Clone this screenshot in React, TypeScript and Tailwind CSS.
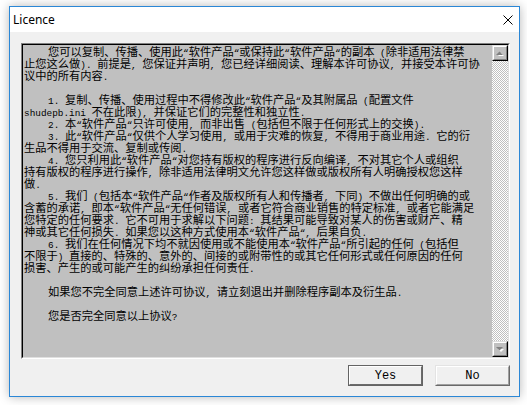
import React from 'react';

// each entry: [indented, text]; empty text = blank line
const lines: [boolean, string][] = [
  [true, '您可以复制、传播、使用此“软件产品“或保持此“软件产品“的副本 (除非适用法律禁'],
  [false, '止您这么做). 前提是, 您保证并声明, 您已经详细阅读、理解本许可协议, 并接受本许可协'],
  [false, '议中的所有内容.'],
  [false, ''],
  [true, '1. 复制、传播、使用过程中不得修改此“软件产品“及其附属品 (配置文件'],
  [false, 'shudepb.ini 不在此限), 并保证它们的完整性和独立性.'],
  [true, '2. 本“软件产品“只许可使用, 而非出售 (包括但不限于任何形式上的交换).'],
  [true, '3. 此“软件产品“仅供个人学习使用, 或用于灾难的恢复, 不得用于商业用途. 它的衍'],
  [false, '生品不得用于交流、复制或传阅.'],
  [true, '4. 您只利用此“软件产品“对您持有版权的程序进行反向编译, 不对其它个人或组织'],
  [false, '持有版权的程序进行操作, 除非适用法律明文允许您这样做或版权所有人明确授权您这样'],
  [false, '做.'],
  [true, '5. 我们 (包括本“软件产品“作者及版权所有人和传播者, 下同) 不做出任何明确的或'],
  [false, '含蓄的承诺, 即本“软件产品“无任何错误, 或者它符合商业销售的特定标准, 或者它能满足'],
  [false, '您特定的任何要求. 它不可用于求解以下问题: 其结果可能导致对某人的伤害或财产、精'],
  [false, '神或其它任何损失. 如果您以这种方式使用本“软件产品“, 后果自负.'],
  [true, '6. 我们在任何情况下均不就因使用或不能使用本“软件产品“所引起的任何 (包括但'],
  [false, '不限于) 直接的、特殊的、意外的、间接的或附带性的或其它任何形式或任何原因的任何'],
  [false, '损害、产生的或可能产生的纠纷承担任何责任.'],
  [false, ''],
  [true, '如果您不完全同意上述许可协议, 请立刻退出并删除程序副本及衍生品.'],
  [false, ''],
  [true, '您是否完全同意以上协议?'],
];

function Line({ text }: { text: string }) {
  // half-width runs get a mono font sized so each char is half a CJK cell
  const parts = text.split(/([\x00-\x7F“”]+)/).filter((p) => p.length > 0);
  return (
    <>
      {parts.map((p, i) =>
        /^[\x00-\x7F“”]+$/.test(p) ? (
          <span key={i} className="font-['Liberation_Mono',monospace] text-[9.4px]">
            {p}
          </span>
        ) : (
          <span key={i}>{p}</span>
        )
      )}
    </>
  );
}

function ScrollButton({ up }: { up?: boolean }) {
  return (
    <div className="w-[16px] h-[16px] bg-[#c0c0c0] border border-t-[#dfdfdf] border-l-[#dfdfdf] border-r-black border-b-black">
      <div className="w-full h-full border border-t-white border-l-white border-r-[#808080] border-b-[#808080] flex items-center justify-center">
        <svg width="8" height="5" viewBox="0 0 8 5">
          {up ? (
            <>
              <path d="M1 5 L4 2 L7 5 Z" fill="#ffffff" transform="translate(1 0)" />
              <path d="M0 4 L3.5 0.5 L7 4 Z" fill="#808080" />
            </>
          ) : (
            <>
              <path d="M1 1 L4 4 L7 1 Z" fill="#ffffff" transform="translate(1 1)" />
              <path d="M0 0 L3.5 3.5 L7 0 Z" fill="#808080" />
            </>
          )}
        </svg>
      </div>
    </div>
  );
}

export default function App() {
  return (
    <div className="w-[527px] h-[405px] bg-white pt-[6px] pl-[9px] overflow-hidden">
      <div className="w-[511px] h-[391px] border border-[#2b87d6] bg-[#f0f0f0] flex flex-col shadow-[0_0_10px_rgba(0,0,0,0.28)]">
        {/* title bar */}
        <div className="h-[25px] bg-white flex items-center justify-between pl-[3px] pr-[6px]">
          <span className="text-[12px] text-black font-['Noto_Sans',sans-serif] leading-none">Licence</span>
          <svg width="10" height="10" viewBox="0 0 10 10">
            <path d="M0.5 0.5 L9.5 9.5 M9.5 0.5 L0.5 9.5" stroke="#000" strokeWidth="1" />
          </svg>
        </div>

        {/* client */}
        <div className="flex-1 flex flex-col pl-[11px] pt-[11px]">
          <div className="w-[489px] h-[316px] border border-t-[#808080] border-l-[#808080] border-r-white border-b-white">
            <div className="w-full h-full border border-t-black border-l-black border-r-[#dfdfdf] border-b-[#dfdfdf] bg-[#c0c0c0] flex">
              <div className="flex-1 pl-[1px] text-black text-[11.25px] leading-[12px] font-['Noto_Sans_CJK_SC',sans-serif] whitespace-pre overflow-hidden">
                {lines.map(([indent, text], i) => (
                  <div key={i} className={indent ? 'h-[12px] pl-[24px]' : 'h-[12px]'}>
                    <Line text={text} />
                  </div>
                ))}
              </div>
              <div className="w-[16px] flex flex-col">
                <ScrollButton up />
                <div className="flex-1 bg-[repeating-conic-gradient(#c0c0c0_0%_25%,#ffffff_0%_50%)] bg-[length:2px_2px]" />
                <ScrollButton />
              </div>
            </div>
          </div>

          {/* buttons */}
          <div className="mt-[6px] flex justify-end gap-[12px] pr-[9px]">
            <button className="w-[75px] h-[21px] border border-[#646464] bg-[#f0f0f0] p-0">
              <div className="w-full h-full border border-t-white border-l-white border-r-[#6b6b6b] border-b-[#6b6b6b] flex items-center justify-center text-[12px] text-black font-['Liberation_Mono',monospace]">
                Yes
              </div>
            </button>
            <button className="w-[75px] h-[21px] border border-t-[#e3e3e3] border-l-[#e3e3e3] border-r-[#696969] border-b-[#696969] bg-[#f0f0f0] p-0">
              <div className="w-full h-full border border-t-white border-l-white border-r-[#a0a0a0] border-b-[#a0a0a0] flex items-center justify-center text-[12px] text-black font-['Liberation_Mono',monospace]">
                No
              </div>
            </button>
          </div>
        </div>
      </div>
    </div>
  );
}
